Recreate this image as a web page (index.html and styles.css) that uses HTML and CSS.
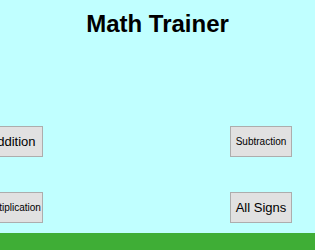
FILE: index.html
```html
<!DOCTYPE html>
<html>
<head>
<meta charset="utf-8">
<link rel="stylesheet" href="styles.css">
</head>
<body>
<div class="app">
  <h1 class="title">Math Trainer</h1>
  <div class="row row-1">
    <button class="btn btn-left big">Addition</button>
    <button class="btn small">Subtraction</button>
  </div>
  <div class="row row-2">
    <button class="btn btn-left small">Multiplication</button>
    <button class="btn big">All Signs</button>
  </div>
  <div class="ground"></div>
</div>
</body>
</html>
```
FILE: styles.css
```css
html, body {
  margin: 0;
  padding: 0;
}
body {
  background: #c0ffff;
  overflow: hidden;
}
.app {
  width: 315px;
  height: 250px;
  display: flex;
  flex-direction: column;
  overflow: hidden;
}
.title {
  margin: 0;
  padding-top: 10px;
  font-family: "Liberation Sans", Arial, sans-serif;
  font-weight: bold;
  font-size: 24px;
  line-height: 28px;
  text-align: center;
  color: #000;
}
.row {
  display: flex;
  justify-content: space-between;
  padding-right: 23px;
}
.row-1 {
  margin-top: 88px;
}
.row-2 {
  margin-top: 35px;
}
.btn {
  box-sizing: border-box;
  width: 62px;
  height: 31px;
  margin: 0;
  padding: 0;
  background: #e1e1e1;
  border: 1px solid #adadad;
  border-radius: 0;
  font-family: "Liberation Sans", Arial, sans-serif;
  color: #000;
  white-space: nowrap;
  display: flex;
  align-items: center;
  justify-content: center;
  overflow: visible;
}
.btn-left {
  margin-left: -19px;
}
.big {
  font-size: 13px;
}
.small {
  font-size: 10px;
}
.ground {
  margin-top: auto;
  height: 17px;
  background: #3fae36;
}
```
